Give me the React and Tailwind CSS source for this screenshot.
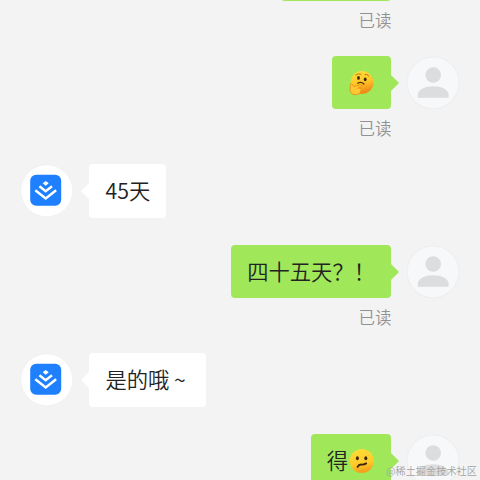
import React from 'react';

const UserAvatar = () => (
  <svg viewBox="0 0 54 54" className="h-[54px] w-[54px] shrink-0">
    <circle cx="27" cy="26.8" r="26" fill="#f7f8f9" stroke="#eeeff1" strokeWidth="1.3" />
    <circle cx="27.2" cy="19" r="7.8" fill="#dcdddf" />
    <path d="M11.8 41.8v-3.2c0-5 7.6-8.3 15.5-8.3s15.3 3.3 15.3 8.3v3.2z" fill="#dcdddf" />
  </svg>
);

const BotAvatar = () => (
  <svg viewBox="0 0 54 54" className="h-[54px] w-[54px] shrink-0">
    <circle cx="26.8" cy="26.8" r="26" fill="#ffffff" stroke="#eeeeee" strokeWidth="0.7" />
    <rect x="10.2" y="10.7" width="31" height="31" rx="6" fill="#1e80ff" />
    <path d="M25.7 16.9l3 2.4-3 2.4-3-2.4z" fill="#ffffff" />
    <path d="M19.4 22.2l6.3 5 6.3-5M15.3 26.2l10.4 8.2 10.4-8.2" fill="none" stroke="#ffffff" strokeWidth="2.4" />
  </svg>
);

const ThinkingEmoji = () => (
  <svg viewBox="0 0 26 26" className="h-[26px] w-[26px] shrink-0">
    <defs>
      <linearGradient id="thinkingFace" x1="0" y1="0" x2="0.3" y2="1">
        <stop offset="0" stopColor="#ffe43c" />
        <stop offset="0.6" stopColor="#fdc526" />
        <stop offset="1" stopColor="#f28b18" />
      </linearGradient>
    </defs>
    <circle cx="13" cy="12.5" r="11.4" fill="url(#thinkingFace)" />
    <ellipse cx="9.5" cy="7.9" rx="1.4" ry="1.9" fill="#42250c" />
    <ellipse cx="16.2" cy="9.3" rx="1.4" ry="1.9" fill="#42250c" />
    <path d="M6.7 4.9q2.4-2 5.3-.8M16 4.4q2.3-.5 3.7 1.4" fill="none" stroke="#c86f12" strokeWidth="1" strokeLinecap="round" />
    <path d="M8.7 13.2q3.6-2 6.2.8" fill="none" stroke="#55300e" strokeWidth="1.3" strokeLinecap="round" />
    <path
      d="M1.5 14.2q1-1.3 1.8.2l1.4 2.2 6.5-1.7q2.2-.2 1.7 1.2-.4.8-4 1.9 3.2-.3 3.2 1.3.5 1-.5 1.9-.1 3.4-5.4 3.5-4.7 0-5.2-5.2z"
      fill="#ffc831"
      stroke="#e98a17"
      strokeWidth="0.8"
      strokeLinejoin="round"
    />
  </svg>
);

const ConfusedEmoji = () => (
  <svg viewBox="0 0 26 26" className="h-[26px] w-[26px] shrink-0">
    <defs>
      <linearGradient id="confusedFace" x1="0" y1="0" x2="0.2" y2="1">
        <stop offset="0" stopColor="#ffdf38" />
        <stop offset="0.7" stopColor="#fdca2a" />
        <stop offset="1" stopColor="#f5a01b" />
      </linearGradient>
    </defs>
    <circle cx="12.8" cy="13" r="12" fill="url(#confusedFace)" />
    <ellipse cx="8.4" cy="10.2" rx="1.5" ry="2" fill="#42250c" />
    <ellipse cx="16.8" cy="10.2" rx="1.5" ry="2" fill="#42250c" />
    <path d="M8.6 18.9q1.2-2.6 4-2.3 2.6.2 4.6-1.2" fill="none" stroke="#42250c" strokeWidth="1.9" strokeLinecap="round" />
  </svg>
);

const SentMessage = ({ children, read }) => (
  <div className="flex flex-col">
    <div className="flex h-[53.7px] items-center justify-end pr-[20px]">
      <div className="flex h-full min-w-[59px] items-center justify-center rounded-[4px] bg-[#a0e75a] px-4">
        {children}
      </div>
      <svg viewBox="0 0 8 16" className="mr-[7px] h-4 w-2">
        <path d="M0 0l8 8-8 8z" fill="#a0e75a" />
      </svg>
      <UserAvatar />
    </div>
    {read && <div className="h-[28px] pt-[7px] pr-[88.5px] text-right text-[16.5px] leading-[24px] text-[#929292]">已读</div>}
  </div>
);

const ReceivedMessage = ({ children }) => (
  <div className="flex h-[53.7px] items-center pl-[20px]">
    <BotAvatar />
    <svg viewBox="0 0 8 16" className="ml-[7px] h-4 w-2">
      <path d="M8 0L0 8l8 8z" fill="#ffffff" />
    </svg>
    <div className="flex h-full items-center rounded-[4px] bg-white pr-4 pl-[16.5px]">{children}</div>
  </div>
);

const App = () => {
  return (
    <div className="relative h-[480px] w-[480px] overflow-hidden bg-[#f3f3f3] font-['Noto_Sans_CJK_SC',sans-serif] text-[21.3px] leading-[32px] font-[350] text-[#222222]">
      <div className="-mt-[52.7px] flex flex-col gap-[26.8px]">
        <SentMessage read>
          <div className="w-[78px]" />
        </SentMessage>
        <SentMessage read>
          <ThinkingEmoji />
        </SentMessage>
        <ReceivedMessage>
          <span className="pb-[2px] whitespace-nowrap">45天</span>
        </ReceivedMessage>
        <SentMessage read>
          <span className="pb-[2px] whitespace-nowrap">四十五天？！</span>
        </SentMessage>
        <ReceivedMessage>
          <span className="pb-[2px] whitespace-nowrap">是的哦</span>
          <span className="w-[21px] pb-[2px] text-center">~</span>
        </ReceivedMessage>
        <SentMessage>
          <span className="mr-px pb-[2px]">得</span>
          <ConfusedEmoji />
        </SentMessage>
      </div>
      <div className="absolute right-[3px] bottom-[1px] text-[10.2px] leading-[16px] whitespace-nowrap text-[#a3a3a3]">
        @稀土掘金技术社区
      </div>
    </div>
  );
};

export default App;
